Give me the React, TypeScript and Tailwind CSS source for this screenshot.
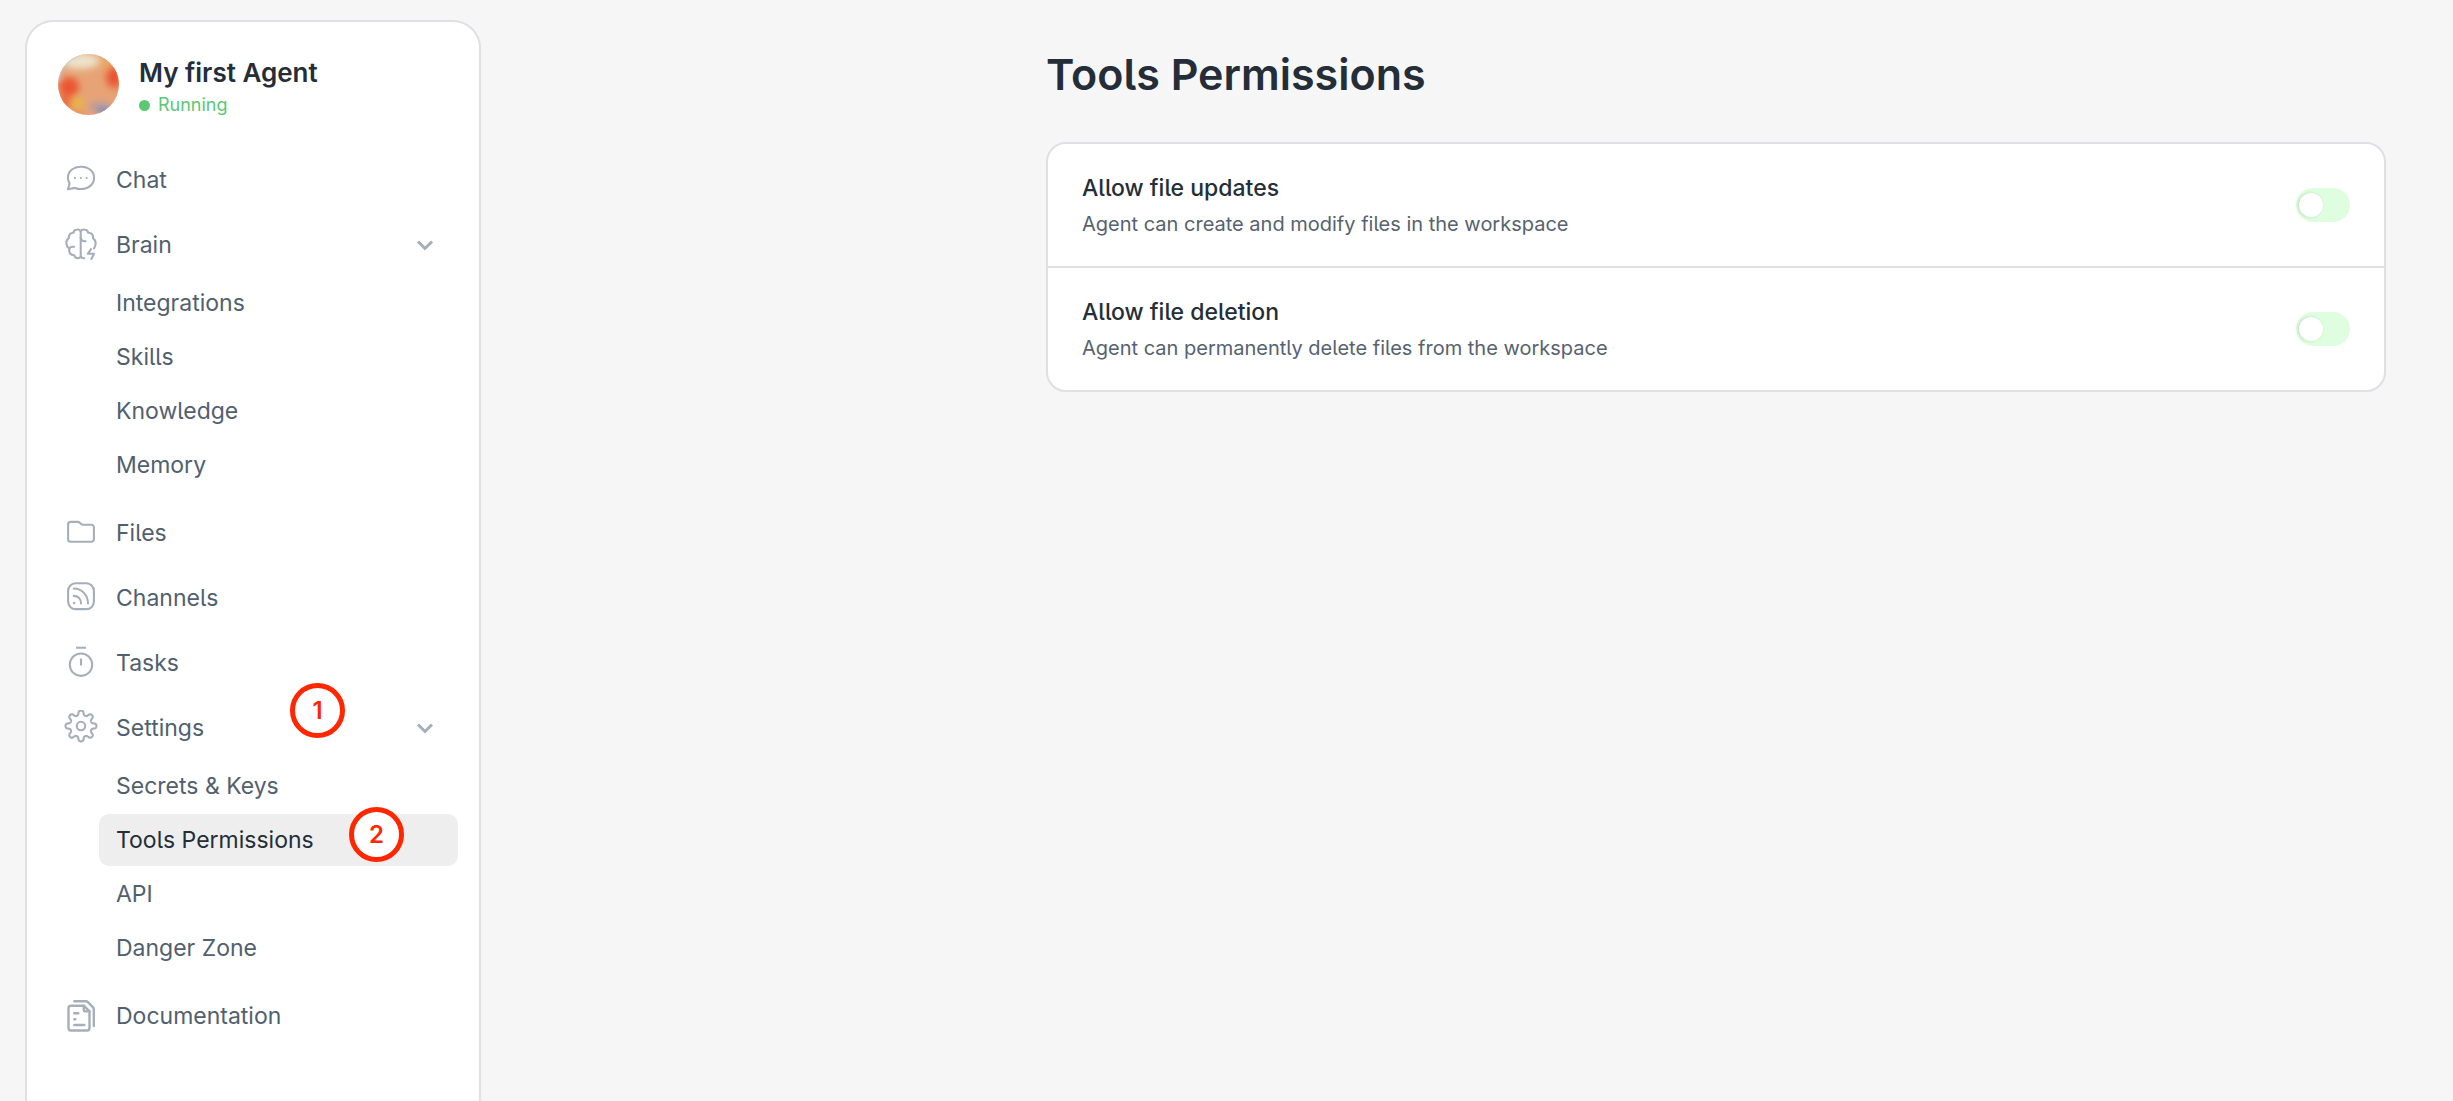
import { useState, type ReactNode } from 'react'

type SubItem = { label: string; active?: boolean; marker?: number }
type NavItem = { label: string; icon: ReactNode; marker?: number; children?: SubItem[] }

function Icon({ children }: { children: ReactNode }) {
  return (
    <svg
      viewBox="0 0 36 36"
      className="size-9 shrink-0 text-[#a5afb9]"
      fill="none"
      stroke="currentColor"
      strokeWidth="2.1"
      strokeLinecap="round"
      strokeLinejoin="round"
      aria-hidden="true"
    >
      {children}
    </svg>
  )
}

const GEAR = (() => {
  const points: string[] = []
  for (let i = 0; i < 240; i++) {
    const a = (i / 240) * Math.PI * 2
    const wave = Math.tanh(1.8 * Math.cos(8 * a)) / Math.tanh(1.8)
    const r = 13.2 + 2.2 * wave
    points.push(`${(18 + r * Math.sin(a)).toFixed(2)} ${(16 - r * Math.cos(a)).toFixed(2)}`)
  }
  return `M${points.join('L')}Z`
})()

const NAV: NavItem[] = [
  {
    label: 'Chat',
    icon: (
      <Icon>
        <path d="M5 27.3 6.6 21.4C5.4 19.8 4.9 17.9 4.9 15.8 4.9 9.3 10.6 4.7 18 4.7s13.1 4.6 13.1 11.1S25.4 27 18 27c-2.2 0-4.3-.4-6.1-1.1Z" />
        <path d="M12 16h.01M17.8 16h.01M23.6 16h.01" strokeWidth="2.2" />
      </Icon>
    ),
  },
  {
    label: 'Brain',
    icon: (
      <Icon>
        <path d="M17.7 4.2C17 2.9 15.6 2.3 14 2.5c-2 .2-3.4 1.5-3.6 3.3C8 5.6 5.5 7.4 5.8 11.2c-2 1.2-2.6 3.4-2.4 5.4.2 2.2 1.2 4 3 5.2-.8 3.8 1.2 6.6 4.9 6.4.5 1.8 1.9 3 3.5 3 1.4 0 2.4-.6 2.9-1.6V4.2" />
        <path d="M6.2 22c.4-1.4 2.4-2.4 4.8-2.2" />
        <path d="M17.7 4.2c.9-1.3 2.3-1.9 3.9-1.7 2 .2 3.3 1.5 3.6 3.3 2.8-.2 5.4 1.8 4.8 5.6 2 1.2 2.8 3.2 2.6 5.2 0 2-.8 3.8-1.6 4.8" />
        <path d="M17.7 10.6c.3 2.4 2.1 3.8 4.9 3.6M17.7 29.6c.7 1.2 1.9 1.8 3.5 1.6" />
        <path d="M28 22.2 24.8 26.8H31L28.4 32" />
      </Icon>
    ),
    children: [{ label: 'Integrations' }, { label: 'Skills' }, { label: 'Knowledge' }, { label: 'Memory' }],
  },
  {
    label: 'Files',
    icon: (
      <Icon>
        <path d="M5.1 9.4A2.5 2.5 0 0 1 7.6 6.9h7.2c.8 0 1.5.3 2 .8l1.3 1.3c.5.5 1.1.8 1.9.8h8.4a2.5 2.5 0 0 1 2.5 2.5v11.9a2.5 2.5 0 0 1-2.5 2.5H7.6a2.5 2.5 0 0 1-2.5-2.5Z" />
      </Icon>
    ),
  },
  {
    label: 'Channels',
    icon: (
      <Icon>
        <rect x="5.1" y="3.3" width="25.8" height="25.8" rx="7.5" />
        <path d="M10.8 8.5c8.2 0 14.2 6.6 14.2 15M10.8 15.9c4.4 0 7.2 3.2 7.2 7.6" />
        <path d="M11.2 23.1h.01" strokeWidth="2.5" />
      </Icon>
    ),
  },
  {
    label: 'Tasks',
    icon: (
      <Icon>
        <path d="M13 2.8h10M18 13.4v7" strokeLinecap="butt" />
        <circle cx="18" cy="19.7" r="11.2" />
      </Icon>
    ),
  },
  {
    label: 'Settings',
    icon: (
      <Icon>
        <path d={GEAR} />
        <circle cx="18" cy="16" r="4.2" />
      </Icon>
    ),
    marker: 1,
    children: [
      { label: 'Secrets & Keys' },
      { label: 'Tools Permissions', active: true, marker: 2 },
      { label: 'API' },
      { label: 'Danger Zone' },
    ],
  },
  {
    label: 'Documentation',
    icon: (
      <Icon>
        <g strokeWidth="2.4">
          <path d="M20.8 7.7H8A2.5 2.5 0 0 0 5.5 10.200V30A2.500 2.500 0 0 0 8 32.500H24A2.500 2.500 0 0 0 26.500 30V13.400Z" />
          <path d="M20.800 7.700v3.700a2 2 0 0 0 2 2h3.700" />
          <path d="M11.300 3.200H22.800a3 3 0 0 1 2.100.9l5 5a3 3 0 0 1 .9 2.100V28" />
          <path d="M11.300 15.200h4M11.300 21.200h1M11.300 27h10" />
        </g>
      </Icon>
    ),
  },
]

function Avatar() {
  return (
    <svg viewBox="0 0 61 61" className="size-[61px] shrink-0" role="img" aria-label="Agent avatar">
      <defs>
        <clipPath id="avatar-clip">
          <circle cx="30.5" cy="30.5" r="30.5" />
        </clipPath>
        <filter id="avatar-blur" x="-50%" y="-50%" width="200%" height="200%">
          <feGaussianBlur stdDeviation="3.6" />
        </filter>
        <filter id="avatar-blur-soft" x="-50%" y="-50%" width="200%" height="200%">
          <feGaussianBlur stdDeviation="2" />
        </filter>
      </defs>
      <g clipPath="url(#avatar-clip)">
        <rect width="61" height="61" fill="#e7a376" />
        <g filter="url(#avatar-blur)">
          <ellipse cx="46" cy="9" rx="8" ry="7" fill="#e8a868" />
          <ellipse cx="22" cy="7" rx="19" ry="8" fill="#ece3c9" />
          <ellipse cx="11" cy="33" rx="10" ry="10" fill="#ea5430" />
          <ellipse cx="7" cy="48" rx="6" ry="9" fill="#ec6a40" />
          <ellipse cx="56" cy="23" rx="8" ry="11" fill="#ea5430" />
          <ellipse cx="20" cy="49" rx="6" ry="6" fill="#e6b840" />
          <ellipse cx="42" cy="53" rx="11" ry="5" fill="#b59aa4" />
          <ellipse cx="18" cy="61" rx="10" ry="4" fill="#f08a58" />
        </g>
        <g filter="url(#avatar-blur-soft)">
          <ellipse cx="46" cy="56" rx="8" ry="3" fill="#8f93aa" />
          <path d="M0 28C1 14 8 5 20 0" fill="none" stroke="#c2c5cc" strokeWidth="3" />
        </g>
      </g>
    </svg>
  )
}

function Marker({ value, className }: { value: number; className: string }) {
  return (
    <span
      className={`pointer-events-none absolute z-10 flex size-[55px] items-center justify-center rounded-full border-[5px] border-[#ff2600] bg-white text-2xl font-semibold text-[#ff2600] ${className}`}
    >
      {value}
    </span>
  )
}

function Chevron() {
  return (
    <svg
      viewBox="0 0 20 20"
      className="ml-auto size-5 text-[#a5afb9]"
      fill="none"
      stroke="currentColor"
      strokeWidth="3"
      aria-hidden="true"
    >
      <path d="M3 6.500 10 13.500 17 6.500" />
    </svg>
  )
}

function Sidebar() {
  return (
    <aside className="flex w-[456px] shrink-0 flex-col rounded-t-[28px] border-2 border-b-0 border-[#dfdfe4] bg-white pt-8">
      <div className="flex items-start gap-5 pl-[31px]">
        <Avatar />
        <div className="pt-[3px]">
          <p className="text-[26px] leading-8 font-semibold text-[#242e38]">My first Agent</p>
          <p className="flex items-center gap-2 text-lg leading-8 text-[#5bc873]">
            <span className="size-[11px] rounded-full bg-[#5bc873]" />
            Running
          </p>
        </div>
      </div>

      <nav className="mt-[33px] pr-[21px] pl-9">
        <ul className="flex flex-col gap-[13px]">
          {NAV.map((item) => (
            <li key={item.label}>
              {item.children ? (
                <button
                  type="button"
                  aria-expanded="true"
                  className="relative flex h-[52px] w-full items-center gap-[17px] pr-[23px] text-left"
                >
                  {item.icon}
                  {item.label}
                  {item.marker && <Marker value={item.marker} className="-top-[19px] left-[227px]" />}
                  <Chevron />
                </button>
              ) : (
                <a href="#" className="flex h-[52px] items-center gap-[17px]">
                  {item.icon}
                  {item.label}
                </a>
              )}
              {item.children && (
                <ul className="mt-1.5 mb-[3px] flex flex-col gap-0.5 pl-9">
                  {item.children.map((sub) => (
                    <li key={sub.label}>
                      <a
                        href="#"
                        aria-current={sub.active ? 'page' : undefined}
                        className={`relative flex h-[52px] items-center rounded-[10px] px-[17px] ${
                          sub.active ? 'bg-[#eeeeee] text-[#242e38]' : ''
                        }`}
                      >
                        {sub.label}
                        {sub.marker && <Marker value={sub.marker} className="-top-[7px] left-[250px]" />}
                      </a>
                    </li>
                  ))}
                </ul>
              )}
            </li>
          ))}
        </ul>
      </nav>
    </aside>
  )
}

function PermissionRow({ id, title, description }: { id: string; title: string; description: string }) {
  const [on, setOn] = useState(false)
  return (
    <div className="flex items-center justify-between px-[34px] py-7">
      <div>
        <label htmlFor={id} className="block leading-8 font-medium text-[#242e38]">
          {title}
        </label>
        <p id={`${id}-description`} className="mt-1.5 text-xl leading-7 text-[#566270]">
          {description}
        </p>
      </div>
      <input
        id={id}
        type="checkbox"
        role="switch"
        checked={on}
        onChange={(e) => setOn(e.target.checked)}
        aria-describedby={`${id}-description`}
        className="h-[34px] w-[54px] shrink-0 cursor-pointer appearance-none rounded-full bg-[#dffddf] px-[3px] py-[5px] before:block before:size-6 before:rounded-full before:bg-white before:shadow-[-1px_0_3px_rgba(0,60,0,0.18)] checked:bg-[#5bc873] checked:before:ml-auto"
      />
    </div>
  )
}

export default function App() {
  return (
    <div className="flex min-h-screen bg-[#f6f6f6] pt-5 pl-[25px] font-['Inter',sans-serif] text-[23px] text-[#51606e] antialiased [font-feature-settings:'cv05']">
      <Sidebar />
      <main className="flex-1 pt-[26px] pr-[67px] pl-12">
        <div className="ml-auto max-w-[1340px]">
          <h1 className="text-[43px] leading-14 font-semibold text-[#242e38]">Tools Permissions</h1>
          <section className="mt-10 divide-y-2 divide-[#dfdfe4] rounded-[20px] border-2 border-[#dfdfe4] bg-white">
            <PermissionRow
              id="file-updates"
              title="Allow file updates"
              description="Agent can create and modify files in the workspace"
            />
            <PermissionRow
              id="file-deletion"
              title="Allow file deletion"
              description="Agent can permanently delete files from the workspace"
            />
          </section>
        </div>
      </main>
    </div>
  )
}
